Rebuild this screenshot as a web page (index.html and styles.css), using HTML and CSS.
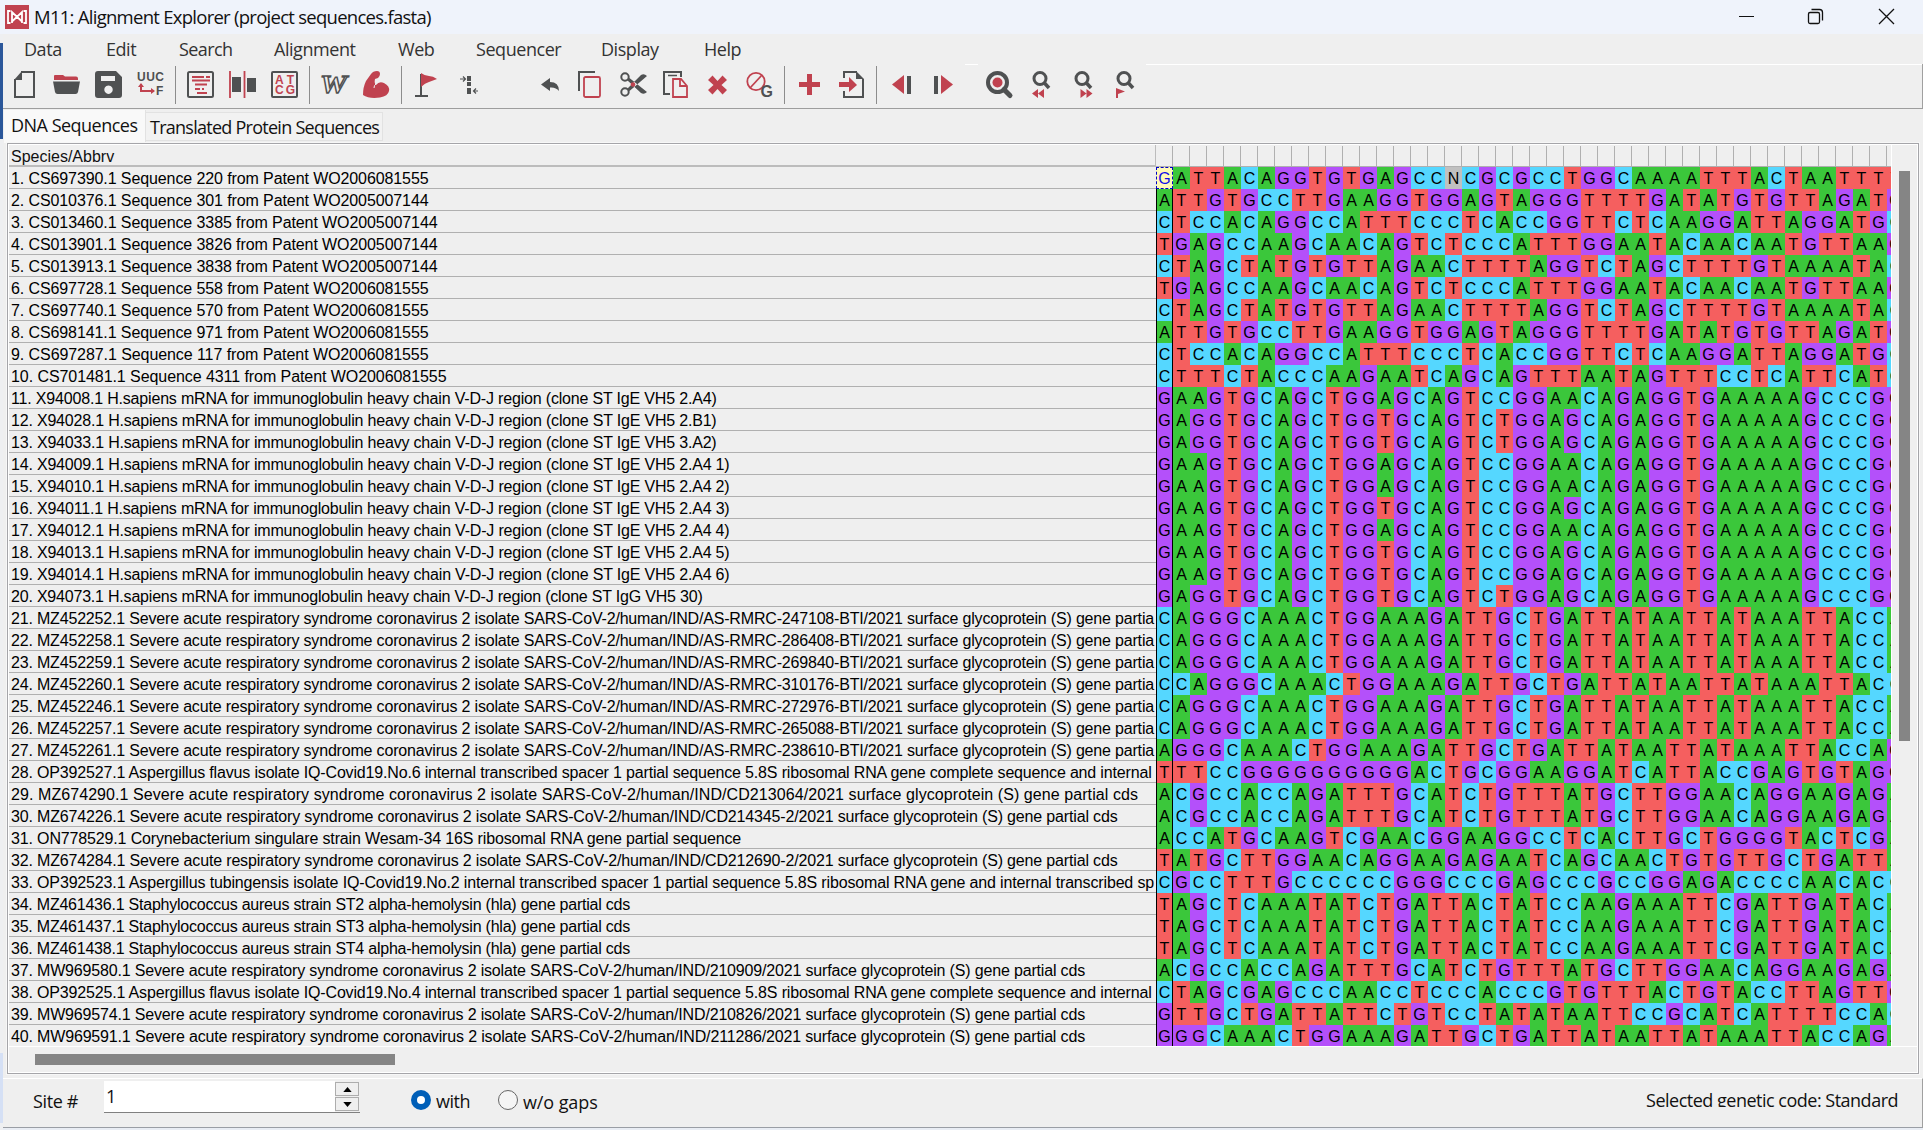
FILE: index.html
```html
<!DOCTYPE html>
<html lang="en">
<head>
<meta charset="utf-8">
<title>M11: Alignment Explorer</title>
<link rel="stylesheet" href="styles.css">
</head>
<body>
<div class="desktop"><div class="behind-blue"></div><div class="behind-low"></div></div>
<main class="window">
  <header class="titlebar">
    <svg class="logo" viewBox="0 0 24 24"><path fill="#c0424f" d="M0 0h24v24H0z"/><path d="M5.500 6H3v12h2.500M18.500 6H21v12h-2.500M7 18V7l10 9.500M17 18V7L7 16.500" fill="none" stroke="#fff" stroke-width="1.800"/></svg>
    <h1 class="title">M11: Alignment Explorer (project sequences.fasta)</h1>
    <svg class="controls" viewBox="0 0 160 30" fill="none" stroke="#111" stroke-width="1.3"><path stroke-width="1" d="M0 16.500h15"/><rect x="69.500" y="12.500" width="11" height="11" rx="1.500"/><path d="M72.500 9.500h8q3 0 3 3v8"/><path d="M140 9l15 15M155 9l-15 15"/></svg>
  </header>
  <nav class="menu">
    <span class="m-data">Data</span><span class="m-edit">Edit</span><span class="m-search">Search</span><span class="m-align">Alignment</span><span class="m-web">Web</span><span class="m-seq">Sequencer</span><span class="m-disp">Display</span><span class="m-help">Help</span>
  </nav>
  <div class="toolbar">
    <button class="tool"><svg viewBox="0 0 28 28"><path class="g-line" d="M10 1h13v25H4V8"/><path class="g" d="M3 9 11 0v9z"/></svg></button>
    <button class="tool"><svg viewBox="0 0 28 28"><path class="r" d="M1 5q0-1 1-1h8l2 1.500h11q2 0 2 2V9H1z"/><path class="g" d="M0 10.500h27l-2 10.500q-.5 2-2.500 2h-18Q2.500 23 2 21z"/></svg></button>
    <button class="tool"><svg viewBox="0 0 28 28"><path class="g" fill-rule="evenodd" d="M3 0h18l6 6v18q0 3-3 3H3q-3 0-3-3V3q0-3 3-3zM6 5v5h14V5zM13.500 14.500a4.200 4.200 0 1 0 .01 0z"/></svg></button>
    <button class="tool"><svg viewBox="0 0 28 28"><text x="0" y="10" class="t11 g" textLength="27">UUC</text><text x="19" y="24" class="t11 g">F</text><path d="M4 13v7h13" fill="none" stroke="#c0424f" stroke-width="2"/><path class="r" d="M1 16l3-4 3 4zM14 17l4 3-4 3z"/></svg></button>
    <i class="sep"></i>
    <button class="tool"><svg viewBox="0 0 28 28"><rect class="g-line" x="1" y="1" width="25" height="25" rx="1.500"/><path class="r-line" d="M5 6h12M19 6h4M5 9.500h18M8 13.500h12M8 18h5M15 18h2M10 22h10"/></svg></button>
    <button class="tool"><svg viewBox="0 0 28 28"><path class="g" d="M3 6h9v15H3zM18 7h9v14h-9z"/><path class="r-line" stroke-width="1.500" d="M1 0v27M15.500 0v27"/></svg></button>
    <button class="tool"><svg viewBox="0 0 28 28"><rect class="g-line" x="1" y="1" width="25" height="25" rx="1"/><text x="4" y="12.500" class="t11 r" textLength="19">AT</text><text x="4" y="23" class="t11 r" textLength="20">CG</text></svg></button>
    <i class="sep"></i>
    <button class="tool"><svg viewBox="0 0 28 28"><text x="-1" y="22" class="wiki" textLength="27" lengthAdjust="spacingAndGlyphs">W</text></svg></button>
    <button class="tool"><svg viewBox="0 0 28 28"><path class="r" d="M8 3q2-3 6-3 3 0 3 3 0 2-2 4l-3 1q-1 4 1 6 3-4 8-2 6 3 5 8-1 5-9 6.500Q6 28 0 24q0-8 3-14z"/><path d="M13 13q-2 1-2 4" fill="none" stroke="#efefef"/></svg></button>
    <i class="sep"></i>
    <button class="tool"><svg viewBox="0 0 28 28"><path d="M8 3v22M2 25h13" class="g-line"/><path class="r" d="M8 2q4 3 8 3t8 3l-8 3q-4 1-8 5z"/></svg></button>
    <button class="tool"><svg viewBox="0 0 28 28"><path class="g" d="M12 5h4v5h-4zM12 11h4v4h-4zM12 17h4v6h-4z"/><path d="M5 8h5M8 5.500 10.500 8 8 10.500M23 20h-4M21 17.500 18.500 20l2.500 2.500" fill="none" stroke="#4f5152" stroke-width="1.200"/></svg></button>
    <i class="gap-wide"></i>
    <button class="tool"><svg viewBox="0 0 28 28"><path class="g" d="M5 13.500 14 7v4q9 0 9 9-3-4-9-3.500V20z"/></svg></button>
    <button class="tool"><svg viewBox="0 0 28 28"><path class="g-line" d="M1 20V1h16"/><rect class="r-line" x="6" y="6" width="16" height="20" rx="1.500"/></svg></button>
    <button class="tool"><svg viewBox="0 0 28 28"><g class="g-line"><circle cx="5" cy="6" r="3.700"/><circle cx="5" cy="21" r="3.700"/></g><path class="g" d="M7 9 9.500 7 27 21q-3 3-6 1zM7 18l2.500 2L27 5q-3-3-6-1z"/><circle class="r" cx="13" cy="13.500" r="2.300"/></svg></button>
    <button class="tool"><svg viewBox="0 0 28 28"><path class="g-line" d="M8 23H2V1h17v5"/><path stroke="#4f5152" stroke-width="1.500" d="M6 4.500h9"/><path class="r-line" d="M11 8h8l6 7v11H11z"/><path class="r-line" d="M18 8v7h7"/></svg></button>
    <button class="tool"><svg viewBox="0 0 28 28"><path class="r" d="M8.500 4.500 13.500 10l5-5.500L23 9l-5.500 5 5.500 5-4.500 4.500-5-5.500-5 5.500L4 19l5.500-5L4 9z"/></svg></button>
    <button class="tool"><svg viewBox="0 0 28 28"><circle class="r-line" cx="10" cy="10.500" r="8.700"/><path class="r-line" d="M4 17 16 4"/><text x="14.500" y="25.500" class="t15 g">G</text></svg></button>
    <i class="sep"></i>
    <button class="tool"><svg viewBox="0 0 28 28"><path class="r" d="M11 3h5v8h8v5h-8v8h-5v-8H3v-5h8z"/></svg></button>
    <button class="tool"><svg viewBox="0 0 28 28"><path class="g-line" d="M6 7V1h13M6 20v6h19V8"/><path class="g" d="M18 0l8 8h-8z"/><path class="r" d="M1 11h10V6l8 8-8 7v-5H1z"/></svg></button>
    <i class="sep"></i>
    <button class="tool"><svg viewBox="0 0 28 28"><path class="r" d="M16 4v19L4 13.500z"/><path class="g" d="M19 5h4v18h-4z"/></svg></button>
    <button class="tool"><svg viewBox="0 0 28 28"><path class="r" d="M11 4v19l12-9.500z"/><path class="g" d="M4 5h4v18H4z"/></svg></button>
    <i class="gap-edge"></i>
    <button class="tool"><svg viewBox="0 0 28 28"><circle cx="12.500" cy="11.500" r="9.500" fill="none" stroke="#4f5152" stroke-width="4"/><path stroke="#4f5152" stroke-width="5" stroke-linecap="round" d="M19 18.500l6 6"/><circle class="r" cx="12.500" cy="11.500" r="5"/></svg></button>
    <button class="tool"><svg viewBox="0 0 28 28"><circle cx="13" cy="7.500" r="6" fill="none" stroke="#4f5152" stroke-width="3"/><path stroke="#4f5152" stroke-width="3.500" d="M17 11.500l5 5.500"/><path class="r" d="M11 18v9l-6-4.500zM17 18v9l-6-4.500z"/></svg></button>
    <button class="tool"><svg viewBox="0 0 28 28"><circle cx="13" cy="7.500" r="6" fill="none" stroke="#4f5152" stroke-width="3"/><path stroke="#4f5152" stroke-width="3.500" d="M17 11.500l5 5.500"/><path class="r" d="M11.500 18v9l6-4.500zM17.500 18v9l6-4.500z"/></svg></button>
    <button class="tool"><svg viewBox="0 0 28 28"><circle cx="13" cy="7.500" r="6" fill="none" stroke="#4f5152" stroke-width="3"/><path stroke="#4f5152" stroke-width="3.500" d="M17 11.500l5 5.500"/><path class="r" d="M5 17l9 3.500L7 23v4H5z"/></svg></button>
    <i class="gap-rest"></i>
  </div>
  <div class="tabs"><span class="tab active">DNA Sequences</span><span class="tab">Translated Protein Sequences</span></div>
  <section class="panel">
    <div class="sheet">
      <div class="names"><div class="names-head">Species/Abbrv</div><div id="names"></div></div>
      <div class="sites"><div class="ticks" id="ticks"></div><div id="rows"></div></div>
      <div class="vscroll"><div class="vthumb"></div></div>
    </div>
    <div class="hscroll"><div class="hthumb"></div></div>
  </section>
  <footer class="status">
    <span class="site-label">Site #</span>
    <div class="site-input"><span>1</span><div class="spin"><i><svg viewBox="0 0 10 6"><path d="M5 0l5 6H0z"/></svg></i><i><svg viewBox="0 0 10 6"><path d="M0 0h10L5 6z"/></svg></i></div></div>
    <i class="radio on"></i><span class="with">with</span>
    <i class="radio"></i><span class="without">w/o gaps</span>
    <span class="code">Selected genetic code: Standard</span>
  </footer>
</main>
<script src="alignment.js"></script>
</body>
</html>
```
FILE: styles.css
```css
* { box-sizing: border-box; }
body { margin: 0; width: 1923px; height: 1130px; overflow: hidden; display: flex; background: #e9edf4; font-family: "Open Sans", "Noto Sans", sans-serif; color: #111; }
.desktop { width: 3px; flex: none; padding-top: 43px; background: #eeeff1; }
.behind-blue { height: 96px; background: #2b579a; }
.behind-low { margin-top: 914px; height: 70px; background: #d5e0f5; }
.window { width: 1920px; height: 1128px; display: flex; flex-direction: column; background: #efefef; border-bottom: 1px solid #9a9ea5; }
.titlebar { height: 34px; flex: none; background: #eff3fb; display: flex; align-items: flex-start; margin-left: -3px; padding-left: 5px; }
.logo { width: 24px; height: 24px; margin-top: 5px; }
.title { margin: 0 0 0 5px; font-size: 18.500px; font-weight: 400; line-height: 33px; white-space: nowrap; width: 1704px; letter-spacing: -0.73px; }
.controls { width: 160px; height: 30px; margin-left: 1px; }
.menu { height: 30px; flex: none; display: flex; padding-left: 21px; font-size: 18px; line-height: 30px; color: #333; letter-spacing: -0.45px; white-space: nowrap; }
.m-data { width: 82px; }
.m-edit { width: 73px; }
.m-search { width: 95px; letter-spacing: -0.6px; }
.m-align { width: 124px; }
.m-web { width: 78px; }
.m-seq { width: 125px; }
.m-disp { width: 103px; }
.toolbar { height: 45px; flex: none; display: flex; border-bottom: 1px solid #9d9d9d; border-right: 1px solid #a0a0a0; padding-left: 1px; }
.tool { width: 42px; height: 42px; flex: none; display: flex; align-items: flex-start; padding: 7px 0 0 7px; border: 0; background: none; }
.tool svg { width: 28px; height: 28px; overflow: visible; flex: none; }
.sep { width: 8px; height: 38px; margin-top: 2px; background: linear-gradient(#8c8c8c, #8c8c8c) 3px 0 / 1px 38px no-repeat; }
.gap-wide { width: 39px; }
.gap-edge { width: 13px; border-top: 1px solid #fff; }
.gap-rest { flex: 1; border-top: 1px solid #fff; }
.g { fill: #4f5152; }
.r { fill: #c0424f; }
.g-line { fill: none; stroke: #4f5152; stroke-width: 2; }
.r-line { fill: none; stroke: #c0424f; stroke-width: 1.8; }
.t11 { font: bold 12px "Liberation Sans", sans-serif; }
.t15 { font: bold 16px "Liberation Sans", sans-serif; }
.wiki { font: italic bold 26px "Liberation Serif", serif; fill: #efefef; stroke: #4f5152; stroke-width: 1.3; }
.tabs { height: 33px; flex: none; display: flex; align-items: flex-start; padding: 1px 0 0 1px; font-size: 18px; white-space: nowrap; letter-spacing: -0.55px; }
.tab { height: 29px; margin-top: 2px; width: 237px; padding-left: 4px; line-height: 28px; background: #f2f2f2; border: 1px solid #e2e2e2; border-left: 0; letter-spacing: -0.74px; }
.tab.active { width: 142px; height: 33px; margin-top: 0; padding-left: 7px; line-height: 31px; background: #f9f9f9; border: 0; border-right: 1px solid #e2e2e2; letter-spacing: -0.51px; }
.panel { margin: 1px 4px 0 4px; height: 931px; flex: none; border: 1px solid #a5a5a9; outline: 1px solid #f7f7f7; padding: 1px 0 0 1px; background: #efefef; font-family: "Liberation Sans", Arial, sans-serif; font-size: 16px; box-shadow: inset 0 0 0 1px #fff; }
.sheet { height: 902px; display: flex; overflow: hidden; border-bottom: 1px solid #fff; }
.names { width: 1147px; flex: none; }
.names-head { height: 22px; border-bottom: 2px solid #bcbcbc; border-right: 1px solid #bcbcbc; padding-left: 2px; line-height: 23px; letter-spacing: 0; }
.name { height: 22px; border-bottom: 1px solid #b0b0b0; padding-left: 2px; line-height: 23px; white-space: pre; overflow: hidden; color: #000; }
.sites { width: 735px; flex: none; overflow: hidden; color: #000; }
.ticks { height: 22px; width: 748px; display: flex; border-bottom: 1px solid #b0b0b0; }
.ticks i { width: 17px; border-right: 1px solid #b0b0b0; margin-top: 1px; }
.row { display: flex; width: 748px; height: 22px; line-height: 23px; text-align: center; }
.row b { width: 17px; font-weight: 400; }
.row b:first-child { border-left: 1px solid #000; border-right: 1px solid #000; }
.A { background: #3bc73b; }
.T { background: #f55f5f; }
.C { background: #55d7ff; }
.G { background: #b450fa; }
.N { background: #c0c0c0; }
.row b.cursor { background: #fffab8; color: #1010e8; border: 1px dashed #0000c8; line-height: 21px; }
.vscroll { flex: 1; border-left: 1px solid #fff; padding: 26px 0 0 7px; }
.vthumb { width: 11px; height: 570px; background: #858585; }
.hscroll { padding: 7px 0 0 26px; }
.hthumb { width: 360px; height: 11px; background: #858585; }
.status { flex: none; height: 50px; margin-top: 4px; border-top: 1px solid #fff; border-right: 1px solid #a0a0a0; display: flex; font-size: 18px; letter-spacing: -0.35px; white-space: nowrap; }
.site-label { width: 101px; padding-left: 30px; line-height: 44px; }
.site-input { width: 256px; height: 32px; margin-top: 2px; background: #fff; border-bottom: 1px solid #808080; display: flex; justify-content: space-between; padding-left: 2px; line-height: 31px; }
.spin { width: 25px; padding: 1px 1px 0 0; display: grid; grid-template-rows: 14px 14px; gap: 1px; background: #efefef; }
.spin i { border: 1px solid #adadad; display: flex; align-items: center; justify-content: center; }
.spin svg { width: 9px; height: 5px; }
.radio { width: 20px; height: 20px; margin: 11px 0 0 51px; border: 1px solid #666; border-radius: 50%; background: #f5f5f5; }
.radio.on { border: 6px solid #005fb8; background: #fff; }
.with { width: 67px; padding-left: 5px; line-height: 45px; margin-right: -51px; letter-spacing: -0.5px; }
.without { width: 90px; padding-left: 5px; line-height: 46px; letter-spacing: -0.1px; }
.code { margin-left: auto; margin-right: 24px; height: 28px; line-height: 43px; overflow: hidden; letter-spacing: -0.5px; }
```
FILE: alignment.js
```js
const H = "H.sapiens mRNA for immunoglobulin heavy chain V-D-J region (clone ST ";
const S = "Severe acute respiratory syndrome coronavirus 2 isolate SARS-CoV-2/human/IND/";
const SG = " surface glycoprotein (S) gene partia";
const seqs = {
  a: "ATTGTGCCTTGAAGGTGGAGTAGGGTTTTGATATGTGTTAGATG",
  b: "CTCCACAGGCCATTTCCCTCACCGGTTCTCAAGGATTAGGATGC",
  c: "TGAGCCAAGCAACAGTCTCCCATTTGGAATACAACAATGTTAAG",
  d: "CTAGCTATGTGTTAGAACTTTTAGGTCTAGCTTTTGTAAAATAC",
  h1: "GAAGTGCAGCTGGAGCAGTCCGGAACAGAGGTGAAAAAGCCCGG",
  h2: "GAGGTGCAGCTGGTGCAGTCTGGAGCAGAGGTGAAAAAGCCCGG",
  h3: "GAAGTGCAGCTGGTGCAGTCCGGAGCAGAGGTGAAAAAGCCCGG",
  s: "CAGGGCAAACTGGAAAGATTGCTGATTATAATTATAAATTACCA",
  m: "ACGCCACCAGATTTGCATCTGTTTATGCTTGGAACAGGAAGAGA",
  t: "TAGCTCAAATATCTGATTACTATCCAAGAAATTCGATTGATACA"
};
// Each record: label, x coordinate where the label ends, sequence (or key of a shared one)
const records = [
  ["CS697390.1 Sequence 220 from Patent WO2006081555", 428.5, "GATTACAGGTGTGAGCCNCGCGCCTGGCAAAATTTACTAATTTT"],
  ["CS010376.1 Sequence 301 from Patent WO2005007144", 428.5, "a"],
  ["CS013460.1 Sequence 3385 from Patent WO2005007144", 437.5, "b"],
  ["CS013901.1 Sequence 3826 from Patent WO2005007144", 437.5, "c"],
  ["CS013913.1 Sequence 3838 from Patent WO2005007144", 437.5, "d"],
  ["CS697728.1 Sequence 558 from Patent WO2006081555", 428.5, "c"],
  ["CS697740.1 Sequence 570 from Patent WO2006081555", 428.5, "d"],
  ["CS698141.1 Sequence 971 from Patent WO2006081555", 428.5, "a"],
  ["CS697287.1 Sequence 117 from Patent WO2006081555", 428.5, "b"],
  ["CS701481.1 Sequence 4311 from Patent WO2006081555", 446.5, "CTTTCTACCCAAGAATCAGCAGTTTAATAGTTTCCTCATTCATC"],
  ["X94008.1 " + H + "IgE VH5 2.A4)", 716.5, "h1"],
  ["X94028.1 " + H + "IgE VH5 2.B1)", 716.5, "h2"],
  ["X94033.1 " + H + "IgE VH5 3.A2)", 716.5, "h2"],
  ["X94009.1 " + H + "IgE VH5 2.A4 1)", 729.5, "h1"],
  ["X94010.1 " + H + "IgE VH5 2.A4 2)", 729.5, "h1"],
  ["X94011.1 " + H + "IgE VH5 2.A4 3)", 729.5, "h3"],
  ["X94012.1 " + H + "IgE VH5 2.A4 4)", 729.5, "h1"],
  ["X94013.1 " + H + "IgE VH5 2.A4 5)", 729.5, "h3"],
  ["X94014.1 " + H + "IgE VH5 2.A4 6)", 729.5, "h3"],
  ["X94073.1 " + H + "IgG VH5 30)", 702.5, "h2"],
  ["MZ452252.1 " + S + "AS-RMRC-247108-BTI/2021" + SG, 1154, "s"],
  ["MZ452258.1 " + S + "AS-RMRC-286408-BTI/2021" + SG, 1154, "s"],
  ["MZ452259.1 " + S + "AS-RMRC-269840-BTI/2021" + SG, 1154, "s"],
  ["MZ452260.1 " + S + "AS-RMRC-310176-BTI/2021" + SG, 1154, "CCAGGGCAAACTGGAAAGATTGCTGATTATAATTATAAATTACC"],
  ["MZ452246.1 " + S + "AS-RMRC-272976-BTI/2021" + SG, 1154, "s"],
  ["MZ452257.1 " + S + "AS-RMRC-265088-BTI/2021" + SG, 1154, "s"],
  ["MZ452261.1 " + S + "AS-RMRC-238610-BTI/2021" + SG, 1154, "AGGGCAAACTGGAAAGATTGCTGATTATAATTATAAATTACCAG"],
  ["OP392527.1 Aspergillus flavus isolate IQ-Covid19.No.6 internal transcribed spacer 1 partial sequence 5.8S ribosomal RNA gene complete sequence and internal", 1151.5, "TTTCCGGGGGGGGGGACTGCGGAAGGATCATTACCGAGTGTAGG"],
  ["MZ674290.1 " + S + "CD213064/2021" + SG + "l cds", 1138, "m"],
  ["MZ674226.1 " + S + "CD214345-2/2021" + SG + "l cds", 1117.5, "m"],
  ["ON778529.1 Corynebacterium singulare strain Wesam-34 16S ribosomal RNA gene partial sequence", 741, "ACCATGCAAGTCGAACGGAAGGCCTCACTTGCTGGGGTACTCGA"],
  ["MZ674284.1 " + S + "CD212690-2/2021" + SG + "l cds", 1117.5, "TATGCTTGGAACAGGAAGAGAATCAGCAACTGTGTTGCTGATTA"],
  ["OP392523.1 Aspergillus tubingensis isolate IQ-Covid19.No.2 internal transcribed spacer 1 partial sequence 5.8S ribosomal RNA gene and internal transcribed sp", 1154, "CGCCTTTGCCCCCCGGGCCCGAGCCCGCCGGAGACCCCAACACC"],
  ["MZ461436.1 Staphylococcus aureus strain ST2 alpha-hemolysin (hla) gene partial cds", 630, "t"],
  ["MZ461437.1 Staphylococcus aureus strain ST3 alpha-hemolysin (hla) gene partial cds", 630, "t"],
  ["MZ461438.1 Staphylococcus aureus strain ST4 alpha-hemolysin (hla) gene partial cds", 630, "t"],
  ["MW969580.1 " + S + "210909/2021" + SG + "l cds", 1085, "m"],
  ["OP392525.1 Aspergillus flavus isolate IQ-Covid19.No.4 internal transcribed spacer 1 partial sequence 5.8S ribosomal RNA gene complete sequence and internal", 1151.5, "CTAGCGAGCCCAACCTCCCACCCGTGTTTACTGTACCTTAGTTG"],
  ["MW969574.1 " + S + "210826/2021" + SG + "l cds", 1085, "GTTGCTGATTATTCTGTCCTATATAATTCCGCATCATTTTCCAC"],
  ["MW969591.1 " + S + "211286/2021" + SG + "l cds", 1085, "GGGCAAACTGGAAAGATTGCTGATTATAATTATAAATTACCAGA"]
];
const names = document.getElementById("names");
const rows = document.getElementById("rows");
document.getElementById("ticks").innerHTML = "<i></i>".repeat(44);
records.forEach(([label, end, key], i) => {
  const name = document.createElement("div");
  name.className = "name";
  const span = document.createElement("span");
  span.textContent = (i + 1) + ". " + label;
  name.append(span);
  names.append(name);
  const box = span.getBoundingClientRect();
  span.style.letterSpacing = ((end - box.left - box.width) / span.textContent.length).toFixed(3) + "px";
  const row = document.createElement("div");
  row.className = "row";
  row.innerHTML = [...(seqs[key] || key)].map(c => `<b class="${c}">${c}</b>`).join("");
  rows.append(row);
});
rows.querySelector("b").classList.add("cursor");
```
